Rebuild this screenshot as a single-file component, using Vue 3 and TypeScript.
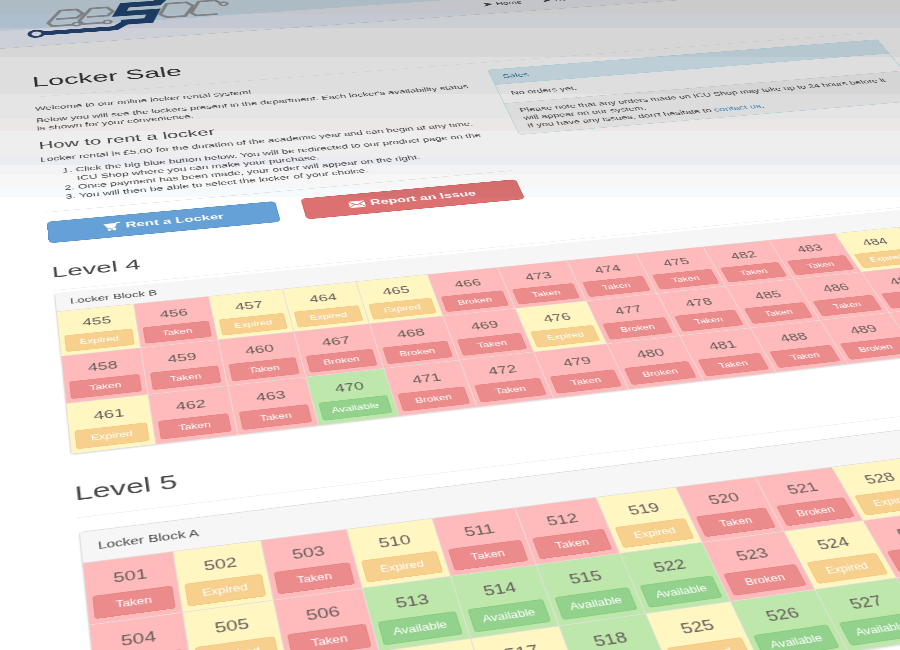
<script setup lang="ts">
type Status = 'Taken' | 'Broken' | 'Expired' | 'Available'

interface Locker {
  id: number
  status: Status
}

interface Block {
  level: string
  name: string
  compact: boolean
  rows: Locker[][]
}

const names: Record<string, Status> = {
  T: 'Taken',
  B: 'Broken',
  E: 'Expired',
  A: 'Available',
}

// Lockers are numbered in stacks of nine: three wide, three high.
function buildRows(first: number, codes: string[]): Locker[][] {
  return codes.map((line, row) =>
    line.split('').map((code, col) => ({
      id: first + Math.floor(col / 3) * 9 + row * 3 + (col % 3),
      status: names[code],
    })),
  )
}

const blocks: Block[] = [
  {
    level: 'Level 4',
    name: 'Locker Block B',
    compact: true,
    rows: buildRows(455, ['ETEEEBTTTTTETT', 'TTTBBTEBTTTTTT', 'ETTABTTBTTBTTT']),
  },
  {
    level: 'Level 5',
    name: 'Locker Block A',
    compact: false,
    rows: buildRows(501, ['TETETTETBETTTT', 'TETAAAABETTTTT', 'TTTEEAEAATTTTT']),
  },
]
</script>

<template>
  <div class="scene">
    <div class="page">
      <header>
        <div class="banner">
          <div class="container">
            <svg class="logo" viewBox="0 -311 290 147" role="img" aria-label="eesoc">
              <g fill="none" stroke="#a0a0a0" stroke-width="5">
                <path d="M40-215H68L76-227L69-240H47L29-205L34-195H60" />
                <circle cx="66" cy="-196" r="5" stroke-width="4" />
                <path d="M81-215H109L117-227L110-240H88L70-205L75-195H101" />
                <circle cx="107" cy="-196" r="5" stroke-width="4" />
                <path d="M191-239H218L226-227L212-198H187L179-208Z" />
                <path d="M264-229L258-239H235L221-206L227-197H256" />
                <circle cx="268" cy="-227" r="5" stroke-width="4" />
              </g>
              <g fill="none" stroke="#24487a">
                <path d="M205-290L190-262L178-243H134L125-218H171L162-192H125" stroke-width="15" />
                <path d="M130-190L116-176H21" stroke-width="12" />
                <circle cx="12" cy="-176" r="9" stroke-width="5" />
              </g>
            </svg>
          </div>
        </div>
        <nav>
          <div class="container links">
            <a href="#home"><svg viewBox="0 0 14 14"><path d="M0 1L14 7L0 13L4 7Z" /></svg>Home</a>
            <a href="#events"><svg viewBox="0 0 14 14"><path d="M0 1L14 7L0 13L4 7Z" /></svg>Events</a>
          </div>
        </nav>
      </header>

      <main class="container">
        <h1 class="rule">Locker Sale</h1>

        <div class="columns">
          <section>
            <p>Welcome to our online locker rental system!</p>
            <p>
              Below you will see the lockers present in the department. Each locker's availability
              status is shown for your convenience.
            </p>
            <h3>How to rent a locker</h3>
            <p>Locker rental is £5.00 for the duration of the academic year and can begin at any time.</p>
            <ol>
              <li>
                Click the big blue button below. You will be redirected to our product page on the
                ICU Shop where you can make your purchase.
              </li>
              <li>Once payment has been made, your order will appear on the right.</li>
              <li>You will then be able to select the locker of your choice.</li>
            </ol>
            <hr />
            <div class="columns">
              <button type="button" class="action rent">
                <svg viewBox="0 0 20 18">
                  <path d="M0 2H14L15 0H20V2H16L13 12H4Z" />
                  <path d="M4 13H14V15H4Z" />
                  <circle cx="6" cy="16" r="2" />
                  <circle cx="12" cy="16" r="2" />
                </svg>
                Rent a Locker
              </button>
              <button type="button" class="action report">
                <svg viewBox="0 0 20 16">
                  <path d="M0 1H20L10 9Z" />
                  <path d="M0 3L6 8L0 14Z" />
                  <path d="M20 3L14 8L20 14Z" />
                  <path d="M7 9L10 11L13 9L20 16H0Z" />
                </svg>
                Report an Issue
              </button>
            </div>
          </section>

          <aside>
            <h4>Sales</h4>
            <p>No orders yet.</p>
            <footer>
              Please note that any orders made on ICU Shop may take up to 24 hours before it will
              appear on our system.<br />
              If you have any issues, don't hesitate to <a href="#contact">contact us</a>.
            </footer>
          </aside>
        </div>

        <section v-for="block in blocks" :key="block.name" class="level">
          <h2 class="rule">{{ block.level }}</h2>
          <div class="panel" :class="{ compact: block.compact }">
            <div class="heading">{{ block.name }}</div>
            <table :aria-label="block.name">
              <tbody>
                <tr v-for="(row, i) in block.rows" :key="i">
                  <td v-for="locker in row" :key="locker.id" :class="locker.status.toLowerCase()">
                    <strong>{{ locker.id }}</strong>
                    <button type="button">{{ locker.status }}</button>
                  </td>
                </tr>
              </tbody>
            </table>
          </div>
        </section>
      </main>
    </div>
    <div class="shade"></div>
  </div>
</template>

<style>
body {
  margin: 0;
  background: #fff;
}
</style>

<style scoped>
* {
  box-sizing: border-box;
}

.scene {
  position: relative;
  height: 100vh;
  overflow: hidden;
  background: #fff;
  color: #484848;
  font: 14px/20px 'Liberation Sans', Arial, sans-serif;
}

/* The page lies on a tilted plane; its origin is the rule under the title. */
.page {
  width: 1740px;
  transform-origin: 0 0;
  transform: matrix3d(0.8113, -0.0538, 0, 0.0000873, 0.0287, 0.349, 0, -0.000314, 0, 0, 1, 0, 33.7, 97, 0, 1)
    translate(-300px, -309px);
}

/* Light falls off towards the far edge of the plane. */
.shade {
  position: absolute;
  inset: 0;
  pointer-events: none;
  mix-blend-mode: multiply;
  background: linear-gradient(
    #cbcbcb 14px,
    #cbced3 14px 28px,
    #d6d6d6 28px 57px,
    #dedede 57px 94px,
    #e5e5e5 94px 119px,
    #ebe7e7 119px 131px,
    #eee 131px 157px,
    #ebecf3 157px 165px,
    #f3f3f3 165px 175px,
    #f7f7f7 175px 188px,
    #f6fafd 188px 197px,
    #fff 197px
  );
}

.container {
  width: 1140px;
  margin: 0 auto;
}

.banner {
  position: relative;
  height: 120px;
  background: #d9edf7;
}

.logo {
  display: block;
  width: 290px;
  height: 147px;
}

nav {
  height: 51px;
  background: #f5f8ff;
  border-bottom: 1px solid #ddd;
}

.links {
  display: flex;
  gap: 30px;
  padding: 12px 0 0 624px;
}

.links a {
  display: flex;
  align-items: center;
  gap: 4px;
  color: #444;
  text-decoration: none;
}

.links svg {
  width: 14px;
  height: 14px;
}

h1,
h2,
h3,
h4 {
  margin: 0;
  font-weight: 400;
}

.rule {
  padding-bottom: 19px;
  border-bottom: 1px solid #eee;
}

h1 {
  margin-top: 79px;
  color: #333;
  font-size: 36px;
  line-height: 40px;
  border-color: #ddd;
}

h2 {
  font-size: 30px;
  line-height: 33px;
}

h3 {
  margin: 20px 0 10px;
  font-size: 24px;
  line-height: 26px;
}

p {
  margin: 0 0 10px;
}

ol {
  margin: 0;
  padding-left: 40px;
}

hr {
  margin: 20px 0;
  border: 0;
  border-top: 1px solid #e5e5e5;
}

.columns {
  display: grid;
  grid-template-columns: 1fr 1fr;
  align-items: start;
  gap: 30px;
}

main > .columns {
  padding-top: 20px;
}

.action {
  display: flex;
  align-items: center;
  justify-content: center;
  gap: 6px;
  height: 46px;
  border: 1px solid;
  border-radius: 6px;
  color: #fff;
  font: bold 17px/24px 'Liberation Sans', Arial, sans-serif;
}

.action svg {
  width: 19px;
  height: 18px;
}

svg {
  fill: currentColor;
}

.rent {
  background: #65a0d6;
  border-color: #5593cb;
}

.report {
  background: #dd7070;
  border-color: #d65f5c;
}

aside {
  border: 1px solid #bce8f1;
  border-radius: 4px;
}

aside h4 {
  padding: 10px 15px;
  background: #d9edf7;
  border-bottom: 1px solid #bce8f1;
  color: #31708f;
  font-size: 14px;
}

aside p {
  margin: 0;
  padding: 15px;
}

aside footer {
  padding: 10px 15px;
  background: #f5f5f5;
  border-top: 1px solid #ddd;
}

aside a {
  color: #428bca;
  text-decoration: none;
}

.level {
  padding-top: 43px;
}

.panel {
  margin-top: 20px;
  border: 1px solid #ddd;
  border-radius: 4px;
  overflow: hidden;
  box-shadow: 0 1px 2px #0002;
}

.heading {
  padding: 11px 15px;
  background: #f6f6f6;
}

.compact {
  margin-top: 5px;
  border-top-color: #f6f6f6;
}

.compact .heading {
  padding: 7px 15px;
}

table {
  width: 100%;
  table-layout: fixed;
  border-collapse: collapse;
}

td {
  padding: 5px 5px 6px;
  border-top: 1px solid #e3dede;
  border-left: 1px solid #e3dede;
  text-align: center;
}

td:first-child {
  border-left: 0;
}

td strong {
  display: block;
  padding: 10px 0;
  color: #665c5c;
  font-size: 18px;
  font-weight: 400;
}

td button {
  display: block;
  width: 100%;
  height: 30px;
  padding: 0;
  border: 1px solid;
  border-radius: 3px;
  color: #fff;
  font: 12px/18px 'Liberation Sans', Arial, sans-serif;
}

.taken,
.broken {
  background: #ffbbbb;
}

.taken button,
.broken button {
  background: #ec8b8b;
  border-color: #e98484;
}

.expired {
  background: #fff6c2;
}

.expired button {
  background: #f6d08c;
  border-color: #f4c981;
}

.available {
  background: #bde7ab;
}

.available button {
  background: #92d28c;
  border-color: #87cb82;
}
</style>
